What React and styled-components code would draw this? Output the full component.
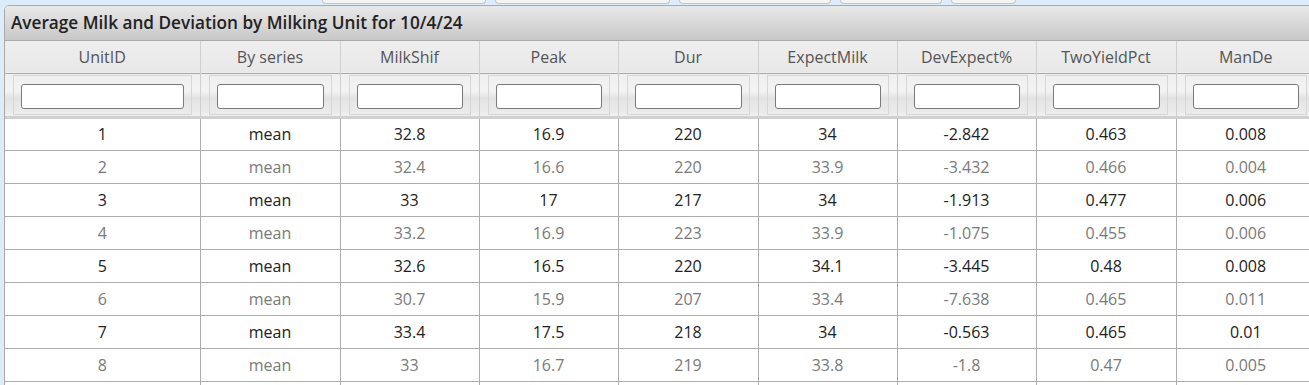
import React from "react";
import styled, { createGlobalStyle } from "styled-components";

const GlobalStyle = createGlobalStyle`
  html, body {
    margin: 0;
    padding: 0;
    background: #ddecfa;
    font-family: "Open Sans", "DejaVu Sans", sans-serif;
  }
`;

const columns = [
  { key: "unit", label: "UnitID", width: 195 },
  { key: "series", label: "By series", width: 140 },
  { key: "milk", label: "MilkShif", width: 139 },
  { key: "peak", label: "Peak", width: 139 },
  { key: "dur", label: "Dur", width: 140 },
  { key: "expect", label: "ExpectMilk", width: 139 },
  { key: "dev", label: "DevExpect%", width: 139 },
  { key: "two", label: "TwoYieldPct", width: 140 },
  { key: "man", label: "ManDe", width: 139 },
];

const tableWidth = columns.reduce((s, c) => s + c.width, 0);

const rows = [
  ["1", "mean", "32.8", "16.9", "220", "34", "-2.842", "0.463", "0.008"],
  ["2", "mean", "32.4", "16.6", "220", "33.9", "-3.432", "0.466", "0.004"],
  ["3", "mean", "33", "17", "217", "34", "-1.913", "0.477", "0.006"],
  ["4", "mean", "33.2", "16.9", "223", "33.9", "-1.075", "0.455", "0.006"],
  ["5", "mean", "32.6", "16.5", "220", "34.1", "-3.445", "0.48", "0.008"],
  ["6", "mean", "30.7", "15.9", "207", "33.4", "-7.638", "0.465", "0.011"],
  ["7", "mean", "33.4", "17.5", "218", "34", "-0.563", "0.465", "0.01"],
  ["8", "mean", "33", "16.7", "219", "33.8", "-1.8", "0.47", "0.005"],
  ["", "", "", "", "", "", "", "", ""],
];

const tabs = [162, 173, 150, 100, 63];

const Page = () => (
  <PAGE>
    <TabStrip>
      {tabs.map((w, i) => (
        <Tab key={i} $w={w} />
      ))}
    </TabStrip>
    <Panel>
      <TitleBar>Average Milk and Deviation by Milking Unit for 10/4/24</TitleBar>
      <Grid style={{ width: tableWidth }}>
        <colgroup>
          {columns.map((c) => (
            <col key={c.key} style={{ width: c.width }} />
          ))}
        </colgroup>
        <thead>
          <HeadRow>
            {columns.map((c) => (
              <HeadCell key={c.key}>{c.label}</HeadCell>
            ))}
          </HeadRow>
          <FilterRow>
            {columns.map((c) => (
              <FilterCell key={c.key}>
                <FilterBox>
                  <FilterInput type="text" />
                </FilterBox>
              </FilterCell>
            ))}
          </FilterRow>
        </thead>
        <tbody>
          {rows.map((r, i) => (
            <DataRow key={i} $muted={i % 2 === 1}>
              {r.map((v, j) => (
                <DataCell key={j}>{v}</DataCell>
              ))}
            </DataRow>
          ))}
        </tbody>
      </Grid>
    </Panel>
  </PAGE>
);

export default function App() {
  return (
    <>
      <GlobalStyle />
      <Page />
    </>
  );
}

const PAGE = styled.div`
  width: 1309px;
  height: 385px;
  overflow: hidden;
  background: #ddecfa;
`;

const TabStrip = styled.div`
  display: flex;
  gap: 9px;
  height: 4px;
  padding-left: 322px;
  overflow: hidden;
`;

const Tab = styled.div`
  width: ${(p) => p.$w}px;
  height: 3px;
  background: #f4f4f4;
  border: 1px solid #c4c4c4;
  border-top: none;
  border-radius: 0 0 6px 6px;
`;

const Panel = styled.div`
  margin: 1px 0 0 4px;
  width: 1360px;
  border: 1px solid #a9a9a9;
  border-radius: 5px 5px 0 0;
  background: #fff;
  overflow: hidden;
`;

const TitleBar = styled.div`
  height: 34px;
  line-height: 34px;
  padding-left: 6px;
  font-size: 17.2px;
  font-weight: 600;
  color: #222;
  background: linear-gradient(#e9e9e9, #c8c8c8);
  border-bottom: 1px solid #a9a9a9;
`;

const Grid = styled.table`
  table-layout: fixed;
  border-collapse: collapse;
  font-size: 16px;
`;

const HeadRow = styled.tr`
  height: 32px;
  background: linear-gradient(#eeeeee, #e8e8e8);
  border-bottom: 1px solid #a9a9a9;
`;

const HeadCell = styled.th`
  font-weight: 400;
  color: #555;
  padding: 0;
  text-align: center;
  border-left: 1px solid #cfcfcf;
  &:first-child {
    border-left: none;
  }
`;

const FilterRow = styled.tr`
  background: linear-gradient(#efefef 0%, #f3f3f3 45%, #e3e3e3 60%, #ececec 100%);
  border-bottom: 3px solid #d0d0d0;
`;

const FilterCell = styled.th`
  padding: 1px 8px 1px 8px;
  border-left: 1px solid #cfcfcf;
  &:first-child {
    border-left: none;
  }
`;

const FilterBox = styled.div`
  display: flex;
  border: 1px solid #d6d6d6;
  padding: 8px 7px 5px 7px;
`;

const FilterInput = styled.input`
  width: 100%;
  box-sizing: border-box;
  height: 25px;
  border: 1px solid #7a7a7a;
  border-radius: 3px;
  background: #fff;
  outline: none;
  padding: 0;
`;

const DataRow = styled.tr`
  height: 33px;
  color: ${(p) => (p.$muted ? "#7a7a7a" : "#222")};
  border-bottom: 1px solid #adadad;
`;

const DataCell = styled.td`
  text-align: center;
  padding: 0;
  border-left: 1px solid #adadad;
  &:first-child {
    border-left: none;
  }
`;
